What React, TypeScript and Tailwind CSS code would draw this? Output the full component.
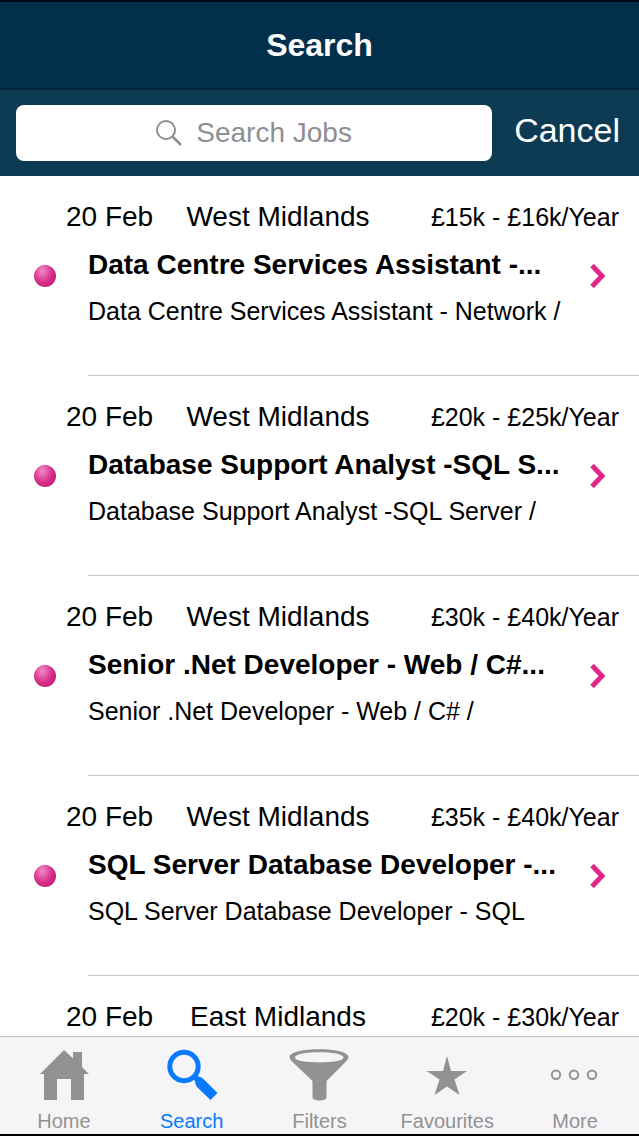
import { ReactNode } from "react";

interface IJob {
  id: number;
  date: string;
  region: string;
  salary: string;
  title: string;
  description: string;
}

interface ITab {
  label: string;
  icon: ReactNode;
  active?: boolean;
}

const jobs: IJob[] = [
  {
    id: 1,
    date: "20 Feb",
    region: "West Midlands",
    salary: "£15k - £16k/Year",
    title: "Data Centre Services Assistant -...",
    description: "Data Centre Services Assistant - Network /",
  },
  {
    id: 2,
    date: "20 Feb",
    region: "West Midlands",
    salary: "£20k - £25k/Year",
    title: "Database Support Analyst -SQL S...",
    description: "Database Support Analyst -SQL Server /",
  },
  {
    id: 3,
    date: "20 Feb",
    region: "West Midlands",
    salary: "£30k - £40k/Year",
    title: "Senior .Net Developer - Web / C#...",
    description: "Senior .Net Developer - Web / C# /",
  },
  {
    id: 4,
    date: "20 Feb",
    region: "West Midlands",
    salary: "£35k - £40k/Year",
    title: "SQL Server Database Developer -...",
    description: "SQL Server Database Developer - SQL",
  },
  {
    id: 5,
    date: "20 Feb",
    region: "East Midlands",
    salary: "£20k - £30k/Year",
    title: "",
    description: "",
  },
];

const tabs: ITab[] = [
  {
    label: "Home",
    icon: (
      <path
        fill="currentColor"
        d="M30 1 L39 9.5 V3 H48 V18 L55 25 H50 V51 H37 V30 H23 V51 H10 V25 H6 Z"
      />
    ),
  },
  {
    label: "Search",
    active: true,
    icon: (
      <>
        <circle cx="22" cy="17.5" r="14.2" fill="none" stroke="currentColor" strokeWidth="5" />
        <path
          fill="currentColor"
          d="M30 29 L34 25 L36.5 27.5 Q40 28 42 30.5 L55.5 44 L48.5 51 L35.500 38.5 Q33 36 33 32 Z"
        />
      </>
    ),
  },
  {
    label: "Filters",
    icon: (
      <path
        fill="currentColor"
        fillRule="evenodd"
        d="M0.5 8 C0.5 -2.5 59.5 -2.5 59.5 8 Q59.5 10 57 12.5 L37.5 32 V48.5 C37.5 52.5 23.5 52.5 23.5 48.5 V32 L3 12.500 Q0.5 10 0.5 8 Z M6 8.5 C6 15 54.5 15 54.5 8.5 C54.5 1.5 6 1.5 6 8.5 Z"
      />
    ),
  },
  {
    label: "Favourites",
    icon: (
      <path
        fill="currentColor"
        d="M30 7 L34 22 H50 L37.5 30.5 L42.5 46 L30 37.5 L17.5 46 L22.5 30.5 L9.5 22 H26 Z"
      />
    ),
  },
  {
    label: "More",
    icon: (
      <g fill="none" stroke="currentColor" strokeWidth="2">
        <circle cx="11" cy="25.7" r="4.2" />
        <circle cx="29" cy="25.7" r="4.2" />
        <circle cx="47" cy="25.7" r="4.2" />
      </g>
    ),
  },
];

const JobRow = ({ job }: { job: IJob }) => {
  return (
    <li>
      <a href={`#job-${job.id}`} className="block h-[199px] pt-[25px]">
        <div className="grid grid-cols-[88px_1fr_217px] items-center pl-[66px] pr-5 leading-8">
          <span className="whitespace-nowrap text-[28px]">{job.date}</span>
          <span className="whitespace-nowrap text-center text-[28px]">{job.region}</span>
          <span className="whitespace-nowrap text-right text-[25px]">{job.salary}</span>
        </div>
        {job.title && (
          <div className="mt-4 flex items-start">
            <div className="flex w-22 shrink-0 pl-[34px] pt-4">
              <span className="size-[22px] rounded-full bg-radial-[at_38%_28%] from-[#f08cc4] via-[#d8308c] to-[#b01060]" />
            </div>
            <div className="min-w-0 flex-1 leading-8">
              <h2 className="truncate text-[28px] font-bold">{job.title}</h2>
              <p className="mt-3.5 truncate text-[25px]">{job.description}</p>
            </div>
            <svg viewBox="0 0 16 26" className="ml-4 mr-[34px] mt-3.5 h-[26px] w-4 shrink-0">
              <path d="M3 2.5 L13 13 L3 23.5" fill="none" stroke="#e0288c" strokeWidth="5" />
            </svg>
          </div>
        )}
      </a>
      <div className="ml-22 h-px bg-[#c8c7cc]" />
    </li>
  );
};

const App = () => {
  return (
    <div className="flex h-screen flex-col bg-white font-['Liberation_Sans',Arial,sans-serif] text-black">
      <header className="shrink-0 border-t-2 border-[#000418] bg-[#02304b] text-white">
        <h1 className="border-b-2 border-[#02273f] py-6 text-center text-[32px] font-bold leading-[38px]">
          Search
        </h1>
        <form
          onSubmit={(e) => e.preventDefault()}
          className="flex items-center bg-[#0c3b53] py-[15px] pl-4 pr-[19px]"
        >
          <label
            htmlFor="search"
            className="flex h-14 min-w-0 flex-1 items-center justify-center gap-3.5 rounded-lg bg-white text-[#8e8e93]"
          >
            <svg viewBox="0 0 26 26" className="size-[26px] shrink-0">
              <g fill="none" stroke="currentColor" strokeWidth="2">
                <circle cx="10" cy="10" r="9" />
                <path d="M16.5 16.5 L25 25" strokeWidth="2.5" />
              </g>
            </svg>
            <input
              id="search"
              type="text"
              aria-label="Search Jobs"
              placeholder="Search Jobs"
              className="field-sizing-content min-w-0 bg-transparent text-[28px] leading-8 text-black outline-none placeholder:text-[#8e8e93]"
            />
          </label>
          <button type="button" className="ml-[22px] pb-1.5 text-[34px] leading-10">
            Cancel
          </button>
        </form>
      </header>

      <main className="min-h-0 flex-1 overflow-y-auto [scrollbar-width:none]">
        <ul>
          {jobs.map((job) => (
            <JobRow key={job.id} job={job} />
          ))}
        </ul>
      </main>

      <nav className="grid shrink-0 grid-cols-5 border-t border-b-2 border-t-[#c4c4c6] border-b-black bg-[#f5f4f7]">
        {tabs.map((tab) => (
          <a
            key={tab.label}
            href={`#${tab.label.toLowerCase()}`}
            className={`flex flex-col items-center gap-2 pt-3 pb-px ${
              tab.active ? "text-[#087aff]" : "text-[#929292]"
            }`}
          >
            <svg viewBox="0 0 60 52" className="h-[52px] w-[60px]">
              {tab.icon}
            </svg>
            <span className="text-[20px] leading-6">{tab.label}</span>
          </a>
        ))}
      </nav>
    </div>
  );
};

export default App;
